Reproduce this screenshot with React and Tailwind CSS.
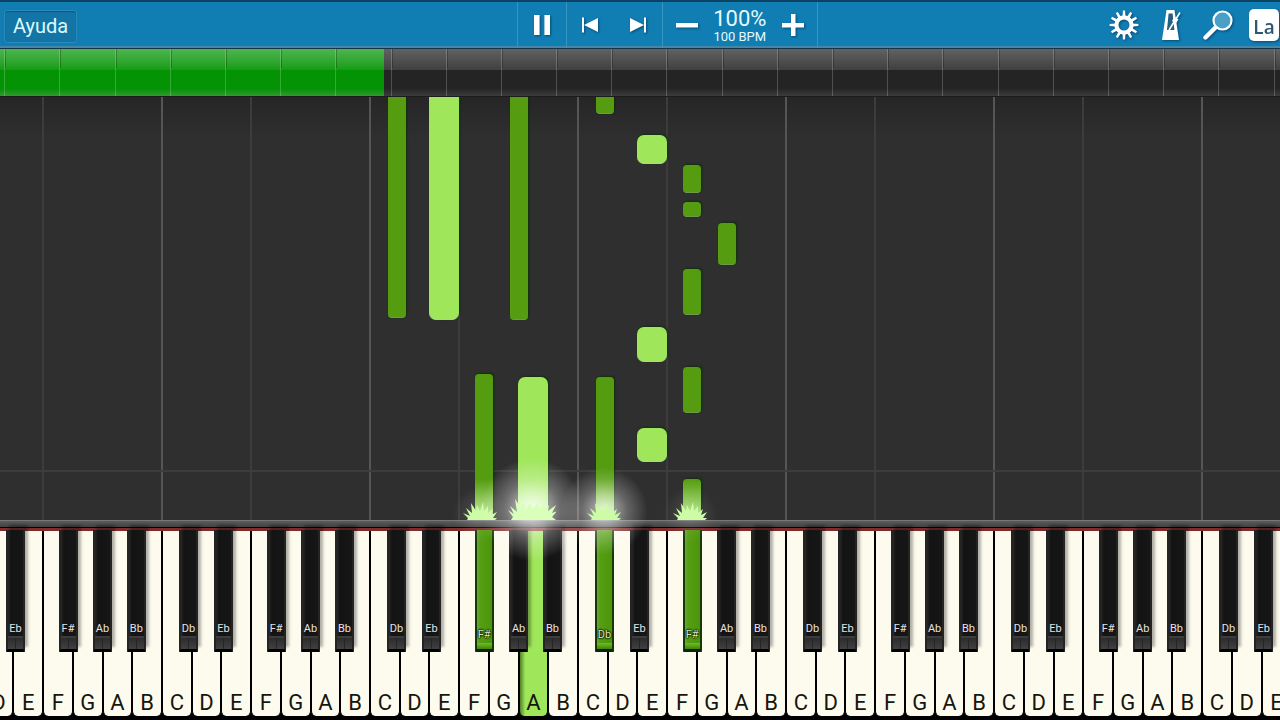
import clsx from 'clsx'

// One octave spans 16.25% of the window, positions inside it are in 208ths
const OCTAVE = 16.25
const FIRST_C = -3.7
const STEPS = 208

const pct = (units) => `${(units / STEPS) * OCTAVE}%`
const laneLeft = (octave, units) =>
  `${FIRST_C + octave * OCTAVE + (units / STEPS) * OCTAVE}%`

const LANES = {
  Db: { at: 19, sharp: true },
  E: { at: 60 },
  'F#': { at: 106, sharp: true },
  Ab: { at: 141, sharp: true },
  A: { at: 149 },
}

// top and end are percentages of the roll's height
const NOTES = [
  { octave: 2, key: 'Db', top: -4, end: 52.2 },
  { octave: 2, key: 'E', top: -4, end: 52.7 },
  { octave: 2, key: 'Ab', top: -4, end: 52.7 },
  { octave: 3, key: 'Db', top: -4, end: 4 },
  { octave: 3, key: 'E', top: 8.9, end: 15.9 },
  { octave: 3, key: 'F#', top: 16.1, end: 22.7 },
  { octave: 3, key: 'F#', top: 24.8, end: 28.4 },
  { octave: 3, key: 'Ab', top: 29.8, end: 39.8 },
  { octave: 3, key: 'F#', top: 40.7, end: 51.6 },
  { octave: 3, key: 'E', top: 54.4, end: 62.6 },
  { octave: 3, key: 'F#', top: 63.8, end: 74.7 },
  { octave: 3, key: 'E', top: 78.3, end: 86.3 },
  { octave: 2, key: 'F#', top: 65.5, end: 100, playing: true },
  { octave: 2, key: 'A', top: 66.1, end: 100, playing: true },
  { octave: 3, key: 'Db', top: 66.2, end: 100, playing: true },
  { octave: 3, key: 'F#', top: 90.3, end: 100, playing: true },
]

const WHITE = ['C', 'D', 'E', 'F', 'G', 'A', 'B']

// Black key hanging over the right side of each white key
const BLACK_AFTER = {
  C: { name: 'Db', left: 'left-[57%]' },
  D: { name: 'Eb', left: 'left-[75%]' },
  F: { name: 'F#', left: 'left-[52%]' },
  G: { name: 'Ab', left: 'left-[68%]' },
  A: { name: 'Bb', left: 'left-[82%]' },
}

const PRESSED = ['F#2', 'A2', 'Db3', 'F#3']

const KEYS = Array.from({ length: 44 }, (_, i) => {
  const step = i + 1
  return { note: WHITE[step % 7], octave: Math.floor(step / 7) }
})

// ─── Toolbar icons ────────────────────────────────────────────────────────────
function GearIcon() {
  return (
    <svg viewBox="0 0 30 30" className="size-[30px]" aria-hidden="true">
      {Array.from({ length: 12 }, (_, i) => (
        <path
          key={i}
          d="M13.500 7 13.900 0.600h2.200L16.500 7z"
          fill="#fff"
          transform={`rotate(${i * 30} 15 15)`}
        />
      ))}
      <circle cx="15" cy="15" r="7.6" fill="none" stroke="#fff" strokeWidth="4.2" />
    </svg>
  )
}

function MetronomeIcon() {
  return (
    <svg viewBox="0 0 20 32" className="h-8 w-5" aria-hidden="true">
      <path d="M5.5 1h8l4.500 30H1z" fill="#fff" />
      <path d="M7.600 4.500h4l1.800 16.500H6z" fill="#235f80" />
      <path d="M8 21 19 3.500" stroke="#fff" strokeWidth="1.6" />
      <path d="M13.500 8l4 2.400-2.600 4-4-2.400z" fill="#fff" />
    </svg>
  )
}

function SearchIcon() {
  return (
    <svg viewBox="0 0 32 32" className="size-8" aria-hidden="true">
      <path d="M3.500 28.500 14 18" stroke="#fff" strokeWidth="4.4" strokeLinecap="round" />
      <circle cx="20.5" cy="11.5" r="9" fill="#4a9fc7" stroke="#fff" strokeWidth="2.2" />
    </svg>
  )
}

function SkipIcon({ flip }) {
  return (
    <svg
      viewBox="0 0 18 18"
      className={clsx('size-[18px]', flip && 'rotate-180')}
      aria-hidden="true"
    >
      <path d="M1 1.500h2v15H1zM3 9 17 2v14z" fill="#fff" />
    </svg>
  )
}

function Toolbar() {
  const tool =
    'flex h-full items-center justify-center drop-shadow-[1px_1px_1px_rgba(0,40,70,0.6)]'
  return (
    <header className="flex h-[49px] shrink-0 border-t-2 border-b border-t-[#0b4463] border-b-[#123548] bg-[#107db3] shadow-[inset_0_-2px_1px_#4b87a5]">
      <div className="flex flex-[515] items-center pt-0.5 pl-1">
        <button className="h-[33px] rounded-[3px] border border-[#2a8abb] bg-[#1375a6] px-2 text-[20px] leading-none text-[#dcfbff] shadow-[inset_0_1px_1px_#0d5880]">
          Ayuda
        </button>
      </div>

      <div className="flex w-[301px] shrink-0 border-x border-[#3a93bf]">
        <button aria-label="Pausa" className={clsx(tool, 'w-12')}>
          <svg viewBox="0 0 16 20" className="h-5 w-4" aria-hidden="true">
            <path d="M0 0h5.600v20H0zM10.400 0h5.600v20h-5.600z" fill="#fff" />
          </svg>
        </button>
        <div className="flex w-[97px] border-x border-[#3a93bf]">
          <button aria-label="Anterior" className={clsx(tool, 'w-12')}>
            <SkipIcon />
          </button>
          <button aria-label="Siguiente" className={clsx(tool, 'w-12')}>
            <SkipIcon flip />
          </button>
        </div>
        <button aria-label="Más lento" className={clsx(tool, 'w-12')}>
          <svg viewBox="0 0 22 22" className="size-[22px]" aria-hidden="true">
            <path d="M0 9h22v4.500H0z" fill="#fff" />
          </svg>
        </button>
        <div className="flex w-[59px] flex-col items-center justify-center whitespace-nowrap text-[#e4fbff]">
          <span className="text-[22px] leading-6">100%</span>
          <span className="text-[13px] leading-3">100 BPM</span>
        </div>
        <button aria-label="Más rápido" className={clsx(tool, 'w-12')}>
          <svg viewBox="0 0 22 22" className="size-[22px]" aria-hidden="true">
            <path d="M0 9h9V0h4.500v9H22v4.500h-8.500V22H9v-8.500H0z" fill="#fff" />
          </svg>
        </button>
      </div>

      <div className="flex flex-[464] items-center justify-end">
        <button aria-label="Ajustes" className={clsx(tool, 'w-[47px]')}>
          <GearIcon />
        </button>
        <button aria-label="Metrónomo" className={clsx(tool, 'w-[47px]')}>
          <MetronomeIcon />
        </button>
        <button aria-label="Buscar" className={clsx(tool, 'w-[47px]')}>
          <SearchIcon />
        </button>
        <div className={clsx(tool, 'ml-2 pr-px')}>
          <button className="h-8 w-[30px] rounded-[5px] bg-white pt-1 text-center font-['Open_Sans',sans-serif] text-[19px] leading-none font-semibold text-[#2c5871]">
            La
          </button>
        </div>
      </div>
    </header>
  )
}

// ─── Song position ────────────────────────────────────────────────────────────
function SongProgress({ value }) {
  return (
    <div
      role="progressbar"
      aria-label="Progreso"
      aria-valuenow={value}
      className="relative flex h-12 shrink-0 overflow-hidden border-b border-[#1c1c1c] bg-linear-to-b from-[#626262] from-0% via-[#404040] via-44% to-[#2c2c2c]"
    >
      <div className="absolute inset-x-0 top-[45%] bottom-0 bg-linear-to-b from-[#242424] from-70% to-[#3c3c3c]" />
      <div
        className="absolute inset-y-0 left-0 bg-linear-to-b from-[#4db54d] to-[#0f9c0f] to-45%"
        style={{ width: `${value}%` }}
      >
        <div className="absolute inset-x-0 top-[45%] bottom-0 bg-linear-to-b from-[#049304] from-75% to-[#2b9b2b]" />
      </div>
      <div className="w-[0.33%] shrink-0" />
      {Array.from({ length: 24 }, (_, i) => (
        <div
          key={i}
          className="relative w-[4.3125%] shrink-0 border-l border-white/20"
        >
          <div className="h-[40%] w-px bg-black/25" />
        </div>
      ))}
    </div>
  )
}

// ─── Falling notes ────────────────────────────────────────────────────────────
function Spark({ wide }) {
  return wide ? (
    <svg viewBox="0 0 48 24" className="h-6 w-12 shrink-0" aria-hidden="true">
      <path
        d="M3 24 5 21 0 14l6 4L2 10l7 6L7 3l6 9 2-6 3 7 4-6 3 6 5-7 2 7 4-5 1 6 4-5-1 6 8-6-4 8 5-2-5 6 4 3z"
        fill="#d9ffba"
      />
    </svg>
  ) : (
    <svg viewBox="0 0 34 20" className="h-5 w-[34px] shrink-0" aria-hidden="true">
      <path
        d="M4 20 5 18 0 13l7 3L3 8l6 5L8 3l5 8 1-6 3 6 3-9 1 9 4-5 0 7 5-4-2 6 6-3-4 6 4 0-4 4z"
        fill="#cdfca6"
      />
    </svg>
  )
}

const SPARKS = [
  { octave: 2, at: 111, glow: 'size-14 opacity-25' },
  { octave: 2, at: 163, glow: 'size-[104px] opacity-100', wide: true },
  { octave: 3, at: 27, glow: 'size-[88px] opacity-85' },
  { octave: 3, at: 113, glow: 'size-14 opacity-20' },
]

function NoteRoll() {
  return (
    <main className="relative z-20 min-h-0 flex-1">
      <div className="absolute inset-0 overflow-hidden bg-linear-to-b from-[#262626] to-[#2f2f2f] to-10%">
        {Array.from({ length: 7 }, (_, octave) => (
          <div
            key={octave}
            className="absolute inset-y-0 w-[16.25%] border-l-2 border-[#555]"
            style={{ left: laneLeft(octave, 0) }}
          >
            <div className="ml-[42.3%] h-full w-0.5 bg-[#3c3c3c]" />
          </div>
        ))}
        <div className="absolute inset-x-0 top-[88.2%] h-0.5 bg-[#3d3d3d]" />

        {NOTES.map((note, i) => {
          const lane = LANES[note.key]
          return (
            <div
              key={i}
              className={clsx(
                'absolute overflow-hidden border-b shadow-[1px_-1px_2px_rgba(8,50,0,0.8)]',
                lane.sharp
                  ? 'rounded-[4px] border-[#6c9b49] bg-[#559c11]'
                  : 'rounded-[7px] border-[#b3d491] bg-[#a0e65b]',
                note.playing && 'rounded-b-none'
              )}
              style={{
                left: laneLeft(note.octave, lane.at),
                width: pct(lane.sharp ? 18 : 30),
                top: `${note.top}%`,
                height: `${note.end - note.top}%`,
              }}
            >
              {note.playing && (
                <div className="absolute inset-x-0 bottom-0 h-10 bg-linear-to-b from-transparent to-[#d3ffad]/80" />
              )}
            </div>
          )
        })}
      </div>

      {SPARKS.map((spark) => (
        <div
          key={`${spark.octave}-${spark.at}`}
          className="pointer-events-none absolute bottom-0 flex h-0 w-0 items-end justify-center"
          style={{ left: laneLeft(spark.octave, spark.at) }}
        >
          <div
            className={clsx(
              'absolute shrink-0 translate-y-[40%] rounded-full bg-radial from-white/85 via-white/30 via-38% to-transparent to-70%',
              spark.glow
            )}
          />
          <div className="relative">
            <Spark wide={spark.wide} />
          </div>
        </div>
      ))}
    </main>
  )
}

// ─── Keyboard ─────────────────────────────────────────────────────────────────
function BlackKey({ name, left, pressed }) {
  return (
    <button
      className={clsx(
        'absolute -top-px z-10 flex h-[122px] w-[64%] flex-col items-center justify-end rounded-b-[1px] border-x-2 border-b-3 text-[11px] leading-none',
        left,
        pressed
          ? 'border-[#173805] border-b-[#10220a] bg-linear-to-r from-[#68a63a] via-[#559e12] via-20% to-[#4c960c] text-[#d5e8c8]'
          : 'border-[#242424] border-b-black bg-linear-to-r from-[#262626] via-[#131313] via-20% to-[#161616] text-[#e3e3e3] shadow-[3px_-5px_3px_rgba(0,0,0,0.3)]'
      )}
    >
      <span
        className={clsx(
          'flex h-[11px] items-center',
          pressed
            ? 'mb-[3px] [text-shadow:0_0_2px_#000,0_0_2px_#000,0_0_2px_#000]'
            : 'mb-0.5'
        )}
      >
        {name}
      </span>
      {pressed ? (
        <span className="h-1.5 w-full bg-linear-to-b from-[#6fc01f] to-[#3f850a]" />
      ) : (
        <span className="flex h-[13px] w-full justify-center border-t-2 border-[#3c3c3c] bg-linear-to-b from-[#2c2c2c] to-[#414141]">
          <span className="h-full w-px bg-[#262626]" />
        </span>
      )}
    </button>
  )
}

function Keyboard() {
  return (
    <div className="shrink-0 overflow-hidden bg-black pb-1">
      <div className="h-[7px] border-t border-[#777] bg-linear-to-b from-[#5c5c5c] to-[#414141]" />
      <div className="mt-px h-[3px] bg-[#802c2b]" />
      <div className="-ml-[1.28%] flex h-[185px] w-[102.15%]">
        {KEYS.map(({ note, octave }) => {
          const black = BLACK_AFTER[note]
          const pressed = PRESSED.includes(`${note}${octave}`)
          return (
            <div key={`${note}${octave}`} className="relative min-w-0 flex-1">
              <button
                className={clsx(
                  'flex h-full w-full items-end justify-center overflow-hidden rounded-b-[5px] border-x border-black pb-px text-[22px] leading-6 text-[#16160f]',
                  pressed
                    ? 'bg-[#a0e65b] bg-linear-to-r from-[#4f8423] to-transparent to-20%'
                    : 'bg-[#fdfbee]'
                )}
              >
                {note}
              </button>
              {black && (
                <BlackKey
                  {...black}
                  pressed={PRESSED.includes(`${black.name}${octave}`)}
                />
              )}
            </div>
          )
        })}
      </div>
    </div>
  )
}

export default function App() {
  return (
    <div className="flex h-screen flex-col overflow-hidden bg-[#2f2f2f] font-[Roboto,sans-serif]">
      <Toolbar />
      <SongProgress value={30} />
      <NoteRoll />
      <Keyboard />
    </div>
  )
}
